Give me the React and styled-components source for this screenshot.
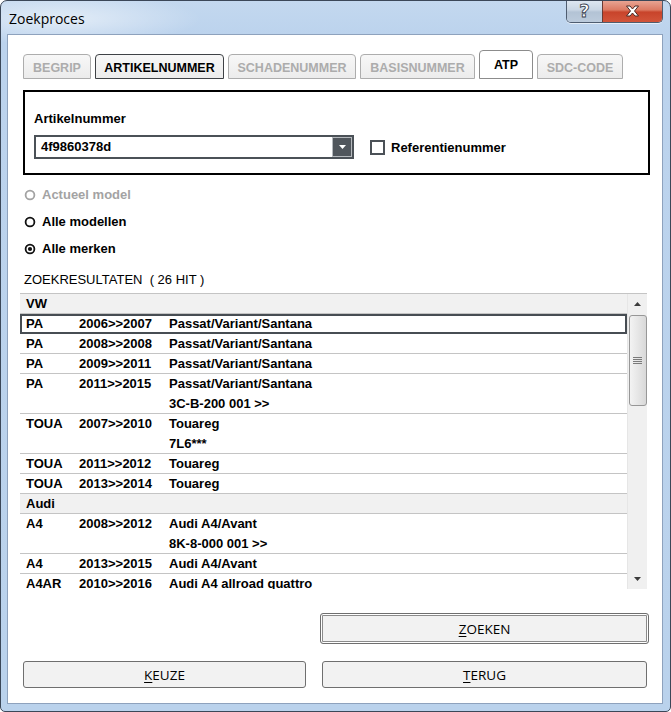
import React from 'react'
import styled, { createGlobalStyle } from 'styled-components'

const GlobalStyle = createGlobalStyle`
  html, body {
    margin: 0;
    padding: 0;
    background: #fff;
  }
  body {
    font-family: 'Liberation Sans', Arial, sans-serif;
  }
`

const Window = styled.div`
  width: 671px;
  height: 712px;
  box-sizing: border-box;
  border: 1px solid #3b4758;
  border-radius: 7px 7px 5px 5px;
  background:
    radial-gradient(ellipse 140px 26px at 60px 18px, rgba(255, 255, 255, 0.55), rgba(255, 255, 255, 0)),
    linear-gradient(180deg, #c3d8ef 0px, #bcd3ed 33px, #bad2ec 100%);
  display: flex;
  flex-direction: column;
  padding: 0 7px 7px 6px;
  overflow: hidden;
`

const TitleBar = styled.div`
  height: 33px;
  display: flex;
  justify-content: space-between;
  align-items: flex-start;
`

const Title = styled.div`
  font-family: 'Open Sans', 'Noto Sans', sans-serif;
  font-size: 14px;
  line-height: 20px;
  color: #000;
  margin: 8px 0 0 2px;
`

const CaptionButtons = styled.div`
  display: flex;
  margin: -1px 0 0 0;
  border: 1px solid #4f5d70;
  border-top: none;
  border-radius: 0 0 5px 5px;
  overflow: hidden;
  box-shadow: 0 1px 0 rgba(255, 255, 255, 0.6);
`

const CaptionButton = styled.div`
  width: ${({ $w }) => $w}px;
  height: 22px;
  display: flex;
  align-items: center;
  justify-content: center;
  background: ${({ $close }) =>
    $close
      ? 'linear-gradient(180deg, #e9a898 0%, #dc7a63 45%, #c8442b 55%, #d2543a 100%)'
      : 'linear-gradient(180deg, #dfe8f2 0%, #c9d6e4 45%, #b3c3d5 55%, #bccbdc 100%)'};
  border-left: ${({ $close }) => ($close ? '1px solid #6a3a33' : 'none')};
  font-family: 'DejaVu Sans', sans-serif;
  font-weight: bold;
  font-size: 18px;
  line-height: 22px;
  color: #fff;
  -webkit-text-stroke: 0.9px #3a4350;
`

const Client = styled.div`
  flex: 1;
  background: #fff;
  border: 1px solid #8ea2bd;
  padding: 15px 12px 0 15px;
  display: flex;
  flex-direction: column;
`

const TabRow = styled.div`
  display: flex;
  align-items: flex-end;
  gap: 4px;
  height: 29px;
`

const Tab = styled.div`
  box-sizing: border-box;
  width: ${({ $w }) => $w}px;
  height: ${({ $selected }) => ($selected ? 29 : 25)}px;
  display: flex;
  align-items: center;
  justify-content: center;
  padding-top: ${({ $selected }) => ($selected ? 0 : 2)}px;
  border: 1px solid ${({ $selected, $focus }) => ($focus ? '#3f4246' : $selected ? '#8c8c8c' : '#adadad')};
  border-radius: 4px 4px 0 0;
  background: ${({ $selected }) => ($selected ? '#fff' : 'linear-gradient(180deg, #f7f7f7, #ececec)')};
  font-size: 12.5px;
  font-weight: bold;
  color: ${({ $selected, $focus }) => ($selected || $focus ? '#000' : '#acacac')};
`

const GroupBox = styled.div`
  margin-top: 11px;
  border: 2px solid #000;
  padding: 19px 0 14px 9px;
`

const FieldLabel = styled.div`
  font-size: 13px;
  font-weight: bold;
  line-height: 16px;
  margin-bottom: 8px;
`

const FieldRow = styled.div`
  display: flex;
  align-items: center;
`

const Combo = styled.div`
  box-sizing: border-box;
  width: 320px;
  height: 24px;
  border: 2px solid #4b5157;
  display: flex;
  align-items: stretch;
`

const ComboText = styled.div`
  flex: 1;
  padding-left: 5px;
  font-size: 13px;
  font-weight: bold;
  line-height: 20px;
`

const ComboButton = styled.div`
  width: 20px;
  background: #50565c;
  box-shadow: inset 0 0 0 1px #b5b9bd;
  display: flex;
  align-items: center;
  justify-content: center;
`

const CheckBox = styled.div`
  box-sizing: border-box;
  width: 15px;
  height: 15px;
  margin-left: 16px;
  border: 2px solid #4b5157;
  background: #fff;
`

const CheckLabel = styled.span`
  margin-left: 6px;
  font-size: 13px;
  font-weight: bold;
`

const Radios = styled.div`
  margin-top: 6px;
  margin-left: 1px;
`

const RadioRow = styled.div`
  height: 27px;
  display: flex;
  align-items: center;
  gap: 6px;
  font-size: 13px;
  font-weight: bold;
  color: ${({ $disabled }) => ($disabled ? '#a3a3a3' : '#000')};
`

const ResultsTitle = styled.div`
  margin: 10px 0 0 1px;
  font-size: 13px;
  line-height: 16px;
  white-space: pre;
`

const List = styled.div`
  margin: 5px 3px 0 -3px;
  height: 295px;
  border-top: 1px solid #c4c4c4;
  display: flex;
  overflow: hidden;
`

const ListBody = styled.div`
  flex: 1;
  overflow: hidden;
`

const GroupHeader = styled.div`
  background: #f1f1f1;
  border-bottom: 1px solid #c4c4c4;
  padding-left: 6px;
  line-height: 19px;
  font-size: 13px;
  font-weight: bold;
`

const Row = styled.div`
  display: grid;
  grid-template-columns: 53px 90px 1fr;
  padding-left: 6px;
  line-height: 20px;
  height: ${({ $lines }) => $lines * 20 - 1}px;
  border-bottom: 1px solid #c4c4c4;
  font-size: 13px;
  font-weight: bold;
  position: relative;
  outline: ${({ $selected }) => ($selected ? '2px solid #474d53' : 'none')};
  outline-offset: -2px;
`

const Scrollbar = styled.div`
  width: 19px;
  background: #f0f0f0;
  border-left: 1px solid #e6e6e6;
  display: flex;
  flex-direction: column;
  align-items: center;
`

const Arrow = styled.div`
  height: 20px;
  width: 100%;
  display: flex;
  align-items: center;
  justify-content: center;
`

const Thumb = styled.div`
  box-sizing: border-box;
  width: 18px;
  height: 91px;
  margin-top: 1px;
  border: 1px solid #979797;
  border-radius: 3px;
  background: linear-gradient(90deg, #f3f3f3, #e6e6e6 50%, #d8d8d8);
  display: flex;
  align-items: center;
  justify-content: center;
`

const Spacer = styled.div`
  flex: 1;
`

const Buttons = styled.div`
  display: flex;
  flex-direction: column;
`

const Button = styled.div`
  box-sizing: border-box;
  width: ${({ $w }) => $w}px;
  height: ${({ $h }) => $h}px;
  border: 1px solid #6f6f6f;
  border-radius: 3px;
  background: #f2f2f2;
  box-shadow: ${({ $default }) => ($default ? 'inset 0 0 0 1px #fff, inset 0 0 0 2px #8b8b8b' : 'none')};
  display: flex;
  align-items: center;
  justify-content: center;
  font-family: 'Open Sans', 'Noto Sans', sans-serif;
  font-size: 13.5px;
  color: #000;
  u {
    text-decoration-thickness: 1px;
    text-underline-offset: 2px;
  }
`

const SearchRow = styled.div`
  margin: 24px 1px 0 0;
  display: flex;
  justify-content: flex-end;
`

const BottomRow = styled.div`
  margin: 17px 0 0 0;
  display: flex;
  gap: 16px;
`

const tabs = [
  { label: 'BEGRIP', w: 68 },
  { label: 'ARTIKELNUMMER', w: 129, focus: true },
  { label: 'SCHADENUMMER', w: 128 },
  { label: 'BASISNUMMER', w: 115 },
  { label: 'ATP', w: 54, selected: true },
  { label: 'SDC-CODE', w: 86 },
]

const results = [
  {
    brand: 'VW',
    rows: [
      { code: 'PA', years: '2006>>2007', model: 'Passat/Variant/Santana', selected: true },
      { code: 'PA', years: '2008>>2008', model: 'Passat/Variant/Santana' },
      { code: 'PA', years: '2009>>2011', model: 'Passat/Variant/Santana' },
      { code: 'PA', years: '2011>>2015', model: 'Passat/Variant/Santana', extra: '3C-B-200 001 >>' },
      { code: 'TOUA', years: '2007>>2010', model: 'Touareg', extra: '7L6***' },
      { code: 'TOUA', years: '2011>>2012', model: 'Touareg' },
      { code: 'TOUA', years: '2013>>2014', model: 'Touareg' },
    ],
  },
  {
    brand: 'Audi',
    rows: [
      { code: 'A4', years: '2008>>2012', model: 'Audi A4/Avant', extra: '8K-8-000 001 >>' },
      { code: 'A4', years: '2013>>2015', model: 'Audi A4/Avant' },
      { code: 'A4AR', years: '2010>>2016', model: 'Audi A4 allroad quattro' },
    ],
  },
]

const Radio = ({ checked, disabled }) => (
  <svg width="12" height="12" viewBox="0 0 12 12">
    <circle cx="6" cy="6" r="4.4" fill="#fff" stroke={disabled ? '#a3a3a3' : '#111'} strokeWidth="1.8" />
    {checked && <circle cx="6" cy="6" r="2.1" fill="#111" />}
  </svg>
)

const App = () => {
  return (
    <>
      <GlobalStyle />
      <Window>
        <TitleBar>
          <Title>Zoekproces</Title>
          <CaptionButtons>
            <CaptionButton $w={35}>?</CaptionButton>
            <CaptionButton $w={59} $close>
              <svg width="15" height="12" viewBox="0 0 15 12">
                <path
                  d="M1.5 1 L5 1 L7.5 4 L10 1 L13.5 1 L9.5 6 L13.5 11 L10 11 L7.5 8 L5 11 L1.5 11 L5.5 6 Z"
                  fill="#fff"
                  stroke="#4a2a25"
                  strokeWidth="1"
                  strokeLinejoin="round"
                />
              </svg>
            </CaptionButton>
          </CaptionButtons>
        </TitleBar>

        <Client>
          <TabRow>
            {tabs.map((t) => (
              <Tab key={t.label} $w={t.w} $selected={t.selected} $focus={t.focus}>
                {t.label}
              </Tab>
            ))}
          </TabRow>

          <GroupBox>
            <FieldLabel>Artikelnummer</FieldLabel>
            <FieldRow>
              <Combo>
                <ComboText>4f9860378d</ComboText>
                <ComboButton>
                  <svg width="7" height="4" viewBox="0 0 7 4">
                    <path d="M0 0 L7 0 L3.5 4 Z" fill="#fff" />
                  </svg>
                </ComboButton>
              </Combo>
              <CheckBox />
              <CheckLabel>Referentienummer</CheckLabel>
            </FieldRow>
          </GroupBox>

          <Radios>
            <RadioRow $disabled>
              <Radio disabled />
              Actueel model
            </RadioRow>
            <RadioRow>
              <Radio />
              Alle modellen
            </RadioRow>
            <RadioRow>
              <Radio checked />
              Alle merken
            </RadioRow>
          </Radios>

          <ResultsTitle>{'ZOEKRESULTATEN  ( 26 HIT )'}</ResultsTitle>

          <List>
            <ListBody>
              {results.map((g) => (
                <React.Fragment key={g.brand}>
                  <GroupHeader>{g.brand}</GroupHeader>
                  {g.rows.map((r, i) => (
                    <Row key={i} $lines={r.extra ? 2 : 1} $selected={r.selected}>
                      <span>{r.code}</span>
                      <span>{r.years}</span>
                      <span>{r.model}</span>
                      {r.extra && (
                        <>
                          <span />
                          <span />
                          <span>{r.extra}</span>
                        </>
                      )}
                    </Row>
                  ))}
                </React.Fragment>
              ))}
            </ListBody>
            <Scrollbar>
              <Arrow>
                <svg width="7" height="4" viewBox="0 0 7 4">
                  <path d="M0 4 L7 4 L3.5 0 Z" fill="#3c3c3c" />
                </svg>
              </Arrow>
              <Thumb>
                <svg width="9" height="9" viewBox="0 0 9 9">
                  <path d="M0 1.5 H9 M0 3.5 H9 M0 5.5 H9 M0 7.5 H9" stroke="#7a7a7a" strokeWidth="1" />
                </svg>
              </Thumb>
              <Spacer />
              <Arrow>
                <svg width="7" height="4" viewBox="0 0 7 4">
                  <path d="M0 0 L7 0 L3.5 4 Z" fill="#3c3c3c" />
                </svg>
              </Arrow>
            </Scrollbar>
          </List>

          <Buttons>
            <SearchRow>
              <Button $w={329} $h={31} $default>
                <span>
                  <u>Z</u>OEKEN
                </span>
              </Button>
            </SearchRow>
            <BottomRow>
              <Button $w={283} $h={27}>
                <span>
                  <u>K</u>EUZE
                </span>
              </Button>
              <Button $w={325} $h={27}>
                <span>
                  <u>T</u>ERUG
                </span>
              </Button>
            </BottomRow>
          </Buttons>
        </Client>
      </Window>
    </>
  )
}

export default App
